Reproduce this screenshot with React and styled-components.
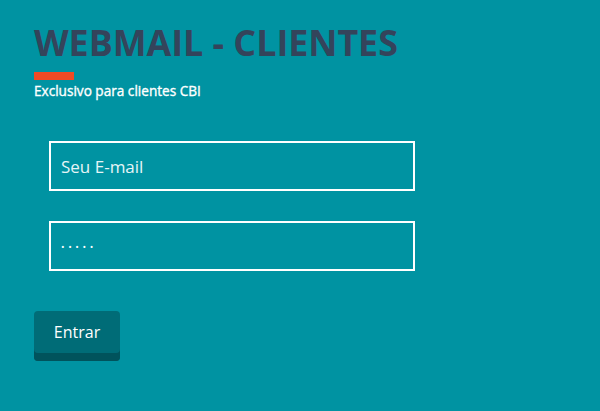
import React from "react";
import styled, { createGlobalStyle } from "styled-components";

const Global = createGlobalStyle`
  html, body { margin: 0; padding: 0; }
  body { background: #0093a2; font-family: "Open Sans", "Noto Sans", sans-serif; }
  input::placeholder { color: #e6f5f7; opacity: 1; }
`;

const Page = styled.div`
  width: 600px;
  height: 411px;
  box-sizing: border-box;
  padding: 18px 34px 0;
  background: #0093a2;
  display: flex;
  flex-direction: column;
`;

const Title = styled.h1`
  margin: 0;
  font-size: 35.8px;
  line-height: 48px;
  font-weight: 700;
  color: #34445b;
`;

const Accent = styled.div`
  width: 40px;
  height: 8px;
  background: #f04b24;
  margin-top: 6px;
`;

const Subtitle = styled.p`
  margin: 2px 0 0;
  font-size: 13.6px;
  line-height: 18px;
  font-weight: 400;
  -webkit-text-stroke: 0.35px #ffffff;
  color: #ffffff;
`;

const Form = styled.form`
  display: flex;
  flex-direction: column;
  gap: 30px;
  margin-top: 41px;
  padding-left: 15px;
`;

const Field = styled.input`
  width: 366px;
  height: 50px;
  box-sizing: border-box;
  border: 2px solid #ffffff;
  background: transparent;
  padding: 0 10px;
  font-family: "Open Sans", "Noto Sans", sans-serif;
  font-size: ${(p) => (p.type === "password" ? "9.5px" : "17px")};
  letter-spacing: ${(p) => (p.type === "password" ? "3.6px" : "0")};
  font-weight: 400;
  color: #ffffff;
  outline: none;
`;

const Button = styled.button`
  margin-top: 40px;
  width: 86px;
  height: 50px;
  box-sizing: border-box;
  border: none;
  border-radius: 4px;
  background: #006c77;
  box-shadow: inset 0 -8px 0 #00535c;
  color: #ffffff;
  font-family: "Open Sans", "Noto Sans", sans-serif;
  font-size: 16px;
  padding: 0 0 8px;
  cursor: pointer;
`;

export default function App() {
  return (
    <>
      <Global />
      <Page>
        <Title>WEBMAIL - CLIENTES</Title>
        <Accent />
        <Subtitle>Exclusivo para clientes CBI</Subtitle>
        <Form onSubmit={(e) => e.preventDefault()}>
          <Field type="text" placeholder="Seu E-mail" />
          <Field type="password" defaultValue="12345" />
        </Form>
        <Button>Entrar</Button>
      </Page>
    </>
  );
}
